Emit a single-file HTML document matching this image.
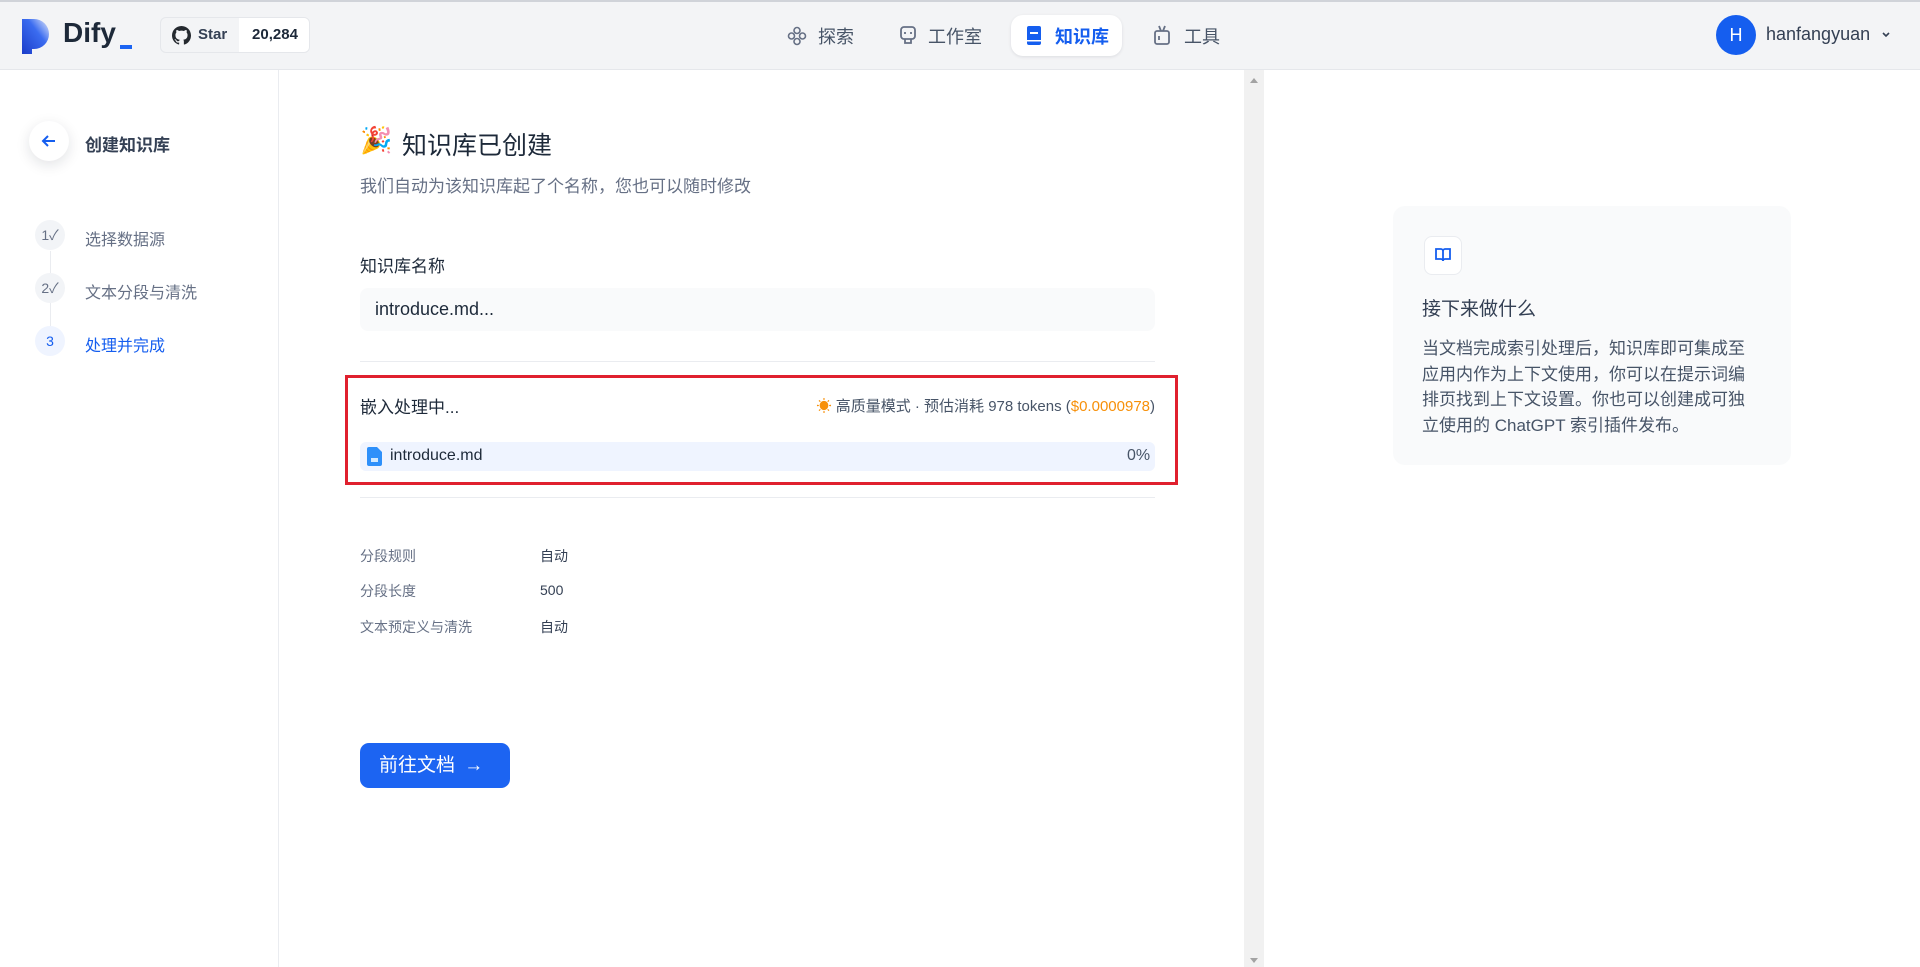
<!DOCTYPE html>
<html><head><meta charset="utf-8"><style>
*{margin:0;padding:0;box-sizing:border-box}
body{width:1920px;height:967px;overflow:hidden;background:#fff;font-family:"Liberation Sans","Noto Sans CJK SC",sans-serif;color:#1d2939;position:relative}
.a{position:absolute;white-space:nowrap}
.hdr{left:0;top:0;width:1920px;height:70px;background:#f3f4f6;border-bottom:1px solid #e5e7eb;border-top:2px solid #d0d3d9}
.side{left:0;top:70px;width:279px;height:897px;border-right:1px solid #eaecf0;background:#fff}
.step{width:30px;height:30px;border-radius:50%;background:#f2f4f7;color:#667085;font-size:14px;display:flex;align-items:center;justify-content:center}
.sb{left:1244px;top:70px;width:20px;height:897px;background:#f1f1f1}
</style></head><body>
<div class="a hdr"></div>
<svg class="a" style="left:20px;top:19px" width="32" height="36" viewBox="0 0 32 36"><defs><linearGradient id="g" x1="0" y1="1" x2="1" y2="0"><stop offset="0" stop-color="#1a3cc9"/><stop offset="0.6" stop-color="#3b6cf0"/><stop offset="1" stop-color="#e6ecfb"/></linearGradient></defs><path d="M2 0H14a15 15 0 0 1 0 30H12V35H2Z" fill="url(#g)"/></svg>
<div class="a" style="left:63px;top:17px;font-size:28px;font-weight:bold;color:#1d2939">Dify</div>
<div class="a" style="left:120px;top:45px;width:12px;height:4px;background:#1c64f2"></div>
<div class="a" style="left:160px;top:17px;width:150px;height:36px;border:1px solid #e5e7eb;border-radius:6px;background:#f3f4f6;overflow:hidden">
 <div style="position:absolute;left:78px;top:0;width:72px;height:36px;background:#fff;font-size:15px;font-weight:bold;line-height:34px;text-align:center">20,284</div>
 <svg style="position:absolute;left:11px;top:8px" width="19" height="19" viewBox="0 0 16 16"><path fill="#24292f" d="M8 0C3.58 0 0 3.58 0 8c0 3.54 2.29 6.53 5.47 7.59.4.07.55-.17.55-.38v-1.33c-2.23.48-2.7-1.07-2.7-1.07-.36-.92-.89-1.17-.89-1.17-.73-.5.05-.49.05-.49.8.06 1.23.83 1.23.83.72 1.22 1.87.87 2.33.66.07-.52.28-.87.5-1.07-1.78-.2-3.64-.89-3.64-3.95 0-.87.31-1.59.82-2.15-.08-.2-.36-1.02.08-2.12 0 0 .67-.21 2.2.82a7.6 7.6 0 0 1 4 0c1.53-1.04 2.2-.82 2.2-.82.44 1.1.16 1.92.08 2.12.51.56.82 1.27.82 2.15 0 3.07-1.87 3.75-3.65 3.95.29.25.54.73.54 1.48v2.2c0 .21.15.46.55.38A8 8 0 0 0 16 8c0-4.42-3.58-8-8-8z"/></svg>
 <div style="position:absolute;left:37px;top:0;font-size:15px;font-weight:bold;line-height:34px;color:#344054">Star</div>
</div>
<svg class="a" style="left:787px;top:26px" width="20" height="20" viewBox="0 0 20 20" fill="none" stroke="#667085" stroke-width="1.6"><circle cx="10" cy="4.5" r="3"/><circle cx="4.5" cy="10" r="3"/><circle cx="15.5" cy="10" r="3"/><circle cx="10" cy="15.5" r="3"/></svg>
<div class="a" style="left:818px;top:23px;font-size:18px;color:#475467">探索</div>
<svg class="a" style="left:899px;top:25px" width="18" height="21" viewBox="0 0 18 21" fill="none" stroke="#667085" stroke-width="1.8"><rect x="2" y="2" width="14" height="12" rx="3"/><path d="M6 7v2M12 7v2M6 14v4h6v-4"/></svg>
<div class="a" style="left:928px;top:23px;font-size:18px;color:#475467">工作室</div>
<div class="a" style="left:1011px;top:15px;width:111px;height:41px;background:#fff;border-radius:12px;box-shadow:0 1px 3px rgba(16,24,40,.1)"></div>
<svg class="a" style="left:1026px;top:25px" width="16" height="21" viewBox="0 0 16 21"><rect x="1" y="1" width="14" height="19" rx="2" fill="#155eef"/><rect x="4" y="7" width="8" height="2" fill="#fff"/><rect x="1" y="15" width="14" height="1.5" fill="#fff"/></svg>
<div class="a" style="left:1055px;top:23px;font-size:18px;font-weight:bold;color:#155eef">知识库</div>
<svg class="a" style="left:1153px;top:24px" width="18" height="22" viewBox="0 0 18 22" fill="none" stroke="#667085" stroke-width="1.8"><rect x="2" y="7" width="14" height="13" rx="2"/><path d="M6 2l2 5M12 2l-2 5M6 12v4"/></svg>
<div class="a" style="left:1184px;top:23px;font-size:18px;color:#475467">工具</div>
<div class="a" style="left:1716px;top:15px;width:40px;height:40px;border-radius:50%;background:#155eef;color:#fff;font-size:18px;text-align:center;line-height:40px">H</div>
<div class="a" style="left:1766px;top:24px;font-size:18px;color:#344054">hanfangyuan</div>
<svg class="a" style="left:1881px;top:31px" width="10" height="8" viewBox="0 0 10 8"><path d="M2 2l3 3 3-3" stroke="#344054" stroke-width="1.6" fill="none"/></svg>
<div class="a side"></div>
<div class="a" style="left:29px;top:121px;width:40px;height:40px;border-radius:50%;background:#fff;box-shadow:0 4px 14px rgba(16,24,40,.12)"></div>
<svg class="a" style="left:40px;top:132px" width="18" height="18" viewBox="0 0 18 18" fill="none" stroke="#155eef" stroke-width="2"><path d="M15 9H3M8 4L3 9l5 5"/></svg>
<div class="a" style="left:85px;top:131px;font-size:17px;font-weight:bold;color:#344054">创建知识库</div>
<div class="a" style="left:50px;top:251px;width:1px;height:76px;background:#eaecf0"></div>
<div class="a step" style="left:35px;top:220px">1✓</div>
<div class="a step" style="left:35px;top:273px">2✓</div>
<div class="a step" style="left:35px;top:326px;background:#eff4ff;color:#155eef">3</div>
<div class="a" style="left:85px;top:226px;font-size:16px;color:#667085">选择数据源</div>
<div class="a" style="left:85px;top:279px;font-size:16px;color:#667085">文本分段与清洗</div>
<div class="a" style="left:85px;top:332px;font-size:16px;color:#155eef">处理并完成</div>
<div class="a" style="left:360px;top:125px;font-size:26px">🎉</div>
<div class="a" style="left:402px;top:126px;font-size:25px;color:#1d2939">知识库已创建</div>
<div class="a" style="left:360px;top:172px;font-size:17px;color:#667085">我们自动为该知识库起了个名称，您也可以随时修改</div>
<div class="a" style="left:360px;top:252px;font-size:17px;color:#1d2939">知识库名称</div>
<div class="a" style="left:360px;top:288px;width:795px;height:43px;background:#f9fafb;border-radius:8px;font-size:18px;line-height:43px;padding-left:15px;color:#1d2939">introduce.md...</div>
<div class="a" style="left:360px;top:361px;width:795px;height:1px;background:#eaecf0"></div>
<div class="a" style="left:345px;top:375px;width:833px;height:110px;border:3px solid #e0202e"></div>
<div class="a" style="left:360px;top:393px;font-size:17px;color:#1d2939">嵌入处理中...</div>
<div class="a" style="right:765px;top:395px;font-size:15px;color:#475467"><span style="color:#f79009">☀</span> 高质量模式 · 预估消耗 978 tokens (<span style="color:#f79009">$0.0000978</span>)</div>
<div class="a" style="left:360px;top:442px;width:795px;height:29px;background:#eff4ff;border-radius:6px"></div>
<svg class="a" style="left:367px;top:447px" width="15" height="19" viewBox="0 0 15 19"><path d="M2 0h8l5 5v12a2 2 0 0 1-2 2H2a2 2 0 0 1-2-2V2a2 2 0 0 1 2-2z" fill="#2e90fa"/><rect x="4" y="11" width="7" height="4" fill="#d1e9ff"/></svg>
<div class="a" style="left:390px;top:447px;font-size:16px;color:#1d2939">introduce.md</div>
<div class="a" style="left:1127px;top:447px;font-size:16px;color:#475467">0%</div>
<div class="a" style="left:360px;top:497px;width:795px;height:1px;background:#eaecf0"></div>
<div class="a" style="left:360px;top:546px;font-size:14px;color:#667085">分段规则</div>
<div class="a" style="left:540px;top:546px;font-size:14px;color:#344054">自动</div>
<div class="a" style="left:360px;top:581px;font-size:14px;color:#667085">分段长度</div>
<div class="a" style="left:540px;top:582px;font-size:14px;color:#344054">500</div>
<div class="a" style="left:360px;top:617px;font-size:14px;color:#667085">文本预定义与清洗</div>
<div class="a" style="left:540px;top:617px;font-size:14px;color:#344054">自动</div>
<div class="a" style="left:360px;top:743px;width:150px;height:45px;background:#1c64f2;border-radius:9px;color:#fff;font-size:19px;line-height:45px;padding-left:19px">前往文档 <span style="margin-left:4px;font-weight:bold">→</span></div>
<div class="a sb"></div>
<div class="a" style="left:1250px;top:78px;width:0;height:0;border-left:4px solid transparent;border-right:4px solid transparent;border-bottom:5px solid #a3a3a3"></div>
<div class="a" style="left:1250px;top:958px;width:0;height:0;border-left:4px solid transparent;border-right:4px solid transparent;border-top:5px solid #a3a3a3"></div>
<div class="a" style="left:1393px;top:206px;width:398px;height:259px;background:#f9fafb;border-radius:12px"></div>
<div class="a" style="left:1424px;top:236px;width:38px;height:39px;background:#fff;border:1px solid #eaecf0;border-radius:8px"></div>
<svg class="a" style="left:1434px;top:246px" width="18" height="18" viewBox="0 0 18 18" fill="none" stroke="#155eef" stroke-width="1.8"><path d="M2 3h5a2 2 0 0 1 2 2v10a2 2 0 0 0-2-2H2zM16 3h-5a2 2 0 0 0-2 2v10a2 2 0 0 1 2-2h5z"/></svg>
<div class="a" style="left:1422px;top:294px;font-size:19px;color:#344054">接下来做什么</div>
<div class="a" style="left:1422px;top:336px;font-size:17px;line-height:25.5px;color:#475467;white-space:normal;width:332px">当文档完成索引处理后，知识库即可集成至应用内作为上下文使用，你可以在提示词编排页找到上下文设置。你也可以创建成可独立使用的 ChatGPT 索引插件发布。</div>
</body></html>
